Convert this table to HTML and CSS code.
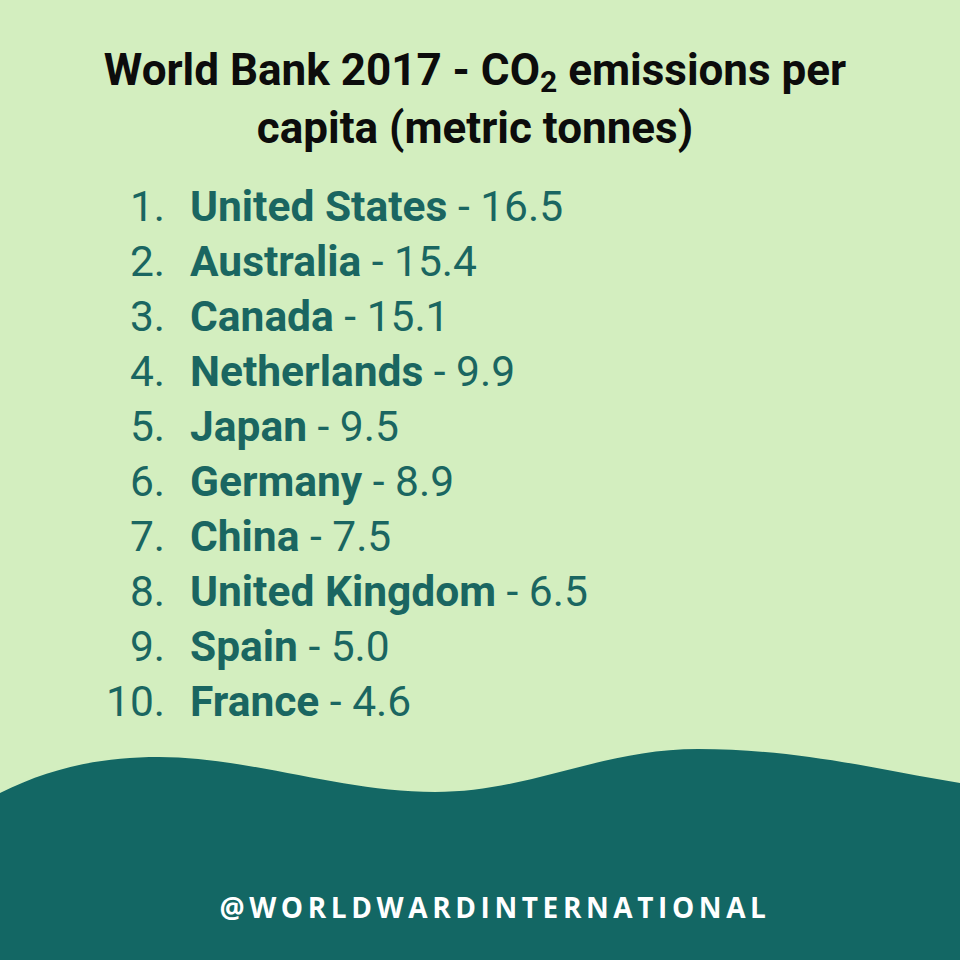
FILE: index.html
```html
<!DOCTYPE html>
<html>
<head>
<meta charset="utf-8">
<link rel="stylesheet" href="styles.css">
</head>
<body>
<div class="page">
  <h1 class="title">World Bank 2017 - CO<sub>2</sub> emissions per<br>capita (metric tonnes)</h1>
  <div class="list">
    <span class="num">1.</span><span class="item"><b>United States</b> - 16.5</span>
    <span class="num">2.</span><span class="item"><b>Australia</b> - 15.4</span>
    <span class="num">3.</span><span class="item"><b>Canada</b> - 15.1</span>
    <span class="num">4.</span><span class="item"><b>Netherlands</b> - 9.9</span>
    <span class="num">5.</span><span class="item"><b>Japan</b> - 9.5</span>
    <span class="num">6.</span><span class="item"><b>Germany</b> - 8.9</span>
    <span class="num">7.</span><span class="item"><b>China</b> - 7.5</span>
    <span class="num">8.</span><span class="item"><b>United Kingdom</b> - 6.5</span>
    <span class="num">9.</span><span class="item"><b>Spain</b> - 5.0</span>
    <span class="num">10.</span><span class="item"><b>France</b> - 4.6</span>
  </div>
  <footer class="footer">
    <svg class="wave" viewBox="0 0 960 60" width="960" height="60" preserveAspectRatio="none">
      <path d="M0,48 C50,23 100,12 159,12 C250,12 340,47 435,47 C530,47 600,4 698,4 C800,4 880,25 960,38 L960,60 L0,60 Z" fill="#136764"/>
    </svg>
    <div class="band">@WORLDWARDINTERNATIONAL</div>
  </footer>
</div>
</body>
</html>
```
FILE: styles.css
```css
html, body {
  margin: 0;
  padding: 0;
}
body {
  background: #d3eebf;
  font-family: Roboto, "Noto Sans", sans-serif;
}
.page {
  width: 960px;
  height: 960px;
  display: flex;
  flex-direction: column;
  overflow: hidden;
}
.title {
  margin: 41px 0 0;
  padding-right: 10px;
  text-align: center;
  font-size: 44px;
  font-weight: 700;
  line-height: 58px;
  color: #0c0c0c;
}
.title sub {
  font-size: 30px;
  line-height: 0;
  vertical-align: -7px;
}
.list {
  margin: 22px 0 0 60px;
  display: grid;
  grid-template-columns: 105px auto;
  column-gap: 25px;
  font-size: 42.5px;
  line-height: 55px;
  color: #1a6661;
}
.num {
  text-align: right;
}
.item b {
  font-weight: 700;
}
.footer {
  margin-top: auto;
  height: 215px;
  display: flex;
  flex-direction: column;
}
.wave {
  display: block;
  flex: none;
}
.band {
  flex: 1;
  background: #136764;
  padding: 88px 0 0 30px;
  text-align: center;
  color: #ffffff;
  font-family: "Open Sans", Roboto, sans-serif;
  font-weight: 700;
  font-size: 28px;
  line-height: 28px;
  letter-spacing: 4.6px;
}
```
